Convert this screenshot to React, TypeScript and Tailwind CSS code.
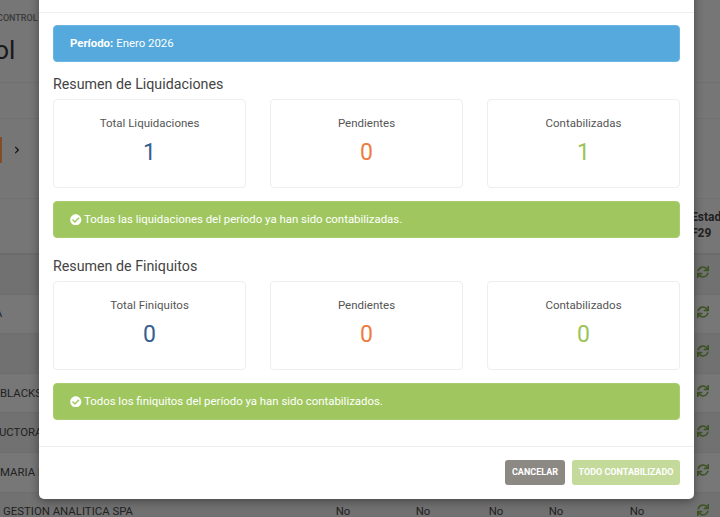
import React from "react";
import { FaCheckCircle, FaSync, FaChevronRight } from "react-icons/fa";

const ROWS = [
  { name: "", shift: "ml-0", stripe: "bg-[#e3e3e3]" },
  { name: "EMPRESA", shift: "-ml-[49px]", stripe: "bg-[#efefef]" },
  { name: "", shift: "ml-0", stripe: "bg-[#e3e3e3]" },
  { name: "BLACKSTONE", shift: "ml-0", stripe: "bg-[#efefef]" },
  { name: "CONSTRUCTORA", shift: "-ml-[45px]", stripe: "bg-[#e3e3e3]" },
  { name: "MARIA DEL", shift: "ml-0", stripe: "bg-[#efefef]" },
  { name: "GESTION ANALITICA SPA", shift: "ml-[3px]", stripe: "bg-[#e3e3e3]" },
];

const Stat = ({ label, value, color }: { label: string; value: number; color: string }) => (
  <div className="h-[88.5px] rounded border border-[#eeeeee] bg-white pt-[14px] text-center">
    <div className="text-[11.5px] leading-[18px] text-[#555555]">{label}</div>
    <div className={`mt-[7px] text-[23px] leading-[28px] ${color}`}>{value}</div>
  </div>
);

const Resumen = ({ title, stats, message }: { title: string; stats: { label: string; value: number; color: string }[]; message: string }) => (
  <section>
    <h3 className="text-[14.25px] leading-[21px] text-[#444444]">{title}</h3>
    <div className="mt-[4px] grid grid-cols-3 gap-x-[24px]">
      {stats.map((s) => (
        <Stat key={s.label} {...s} />
      ))}
    </div>
    <div className="mt-[13px] flex h-[37px] items-center gap-[2.5px] rounded border border-[#a9cc6e] bg-[#a0c75f] pl-[16px] pt-[1px] text-[11.4px] text-white">
      <FaCheckCircle className="text-[11.5px]" />
      <span>{message}</span>
    </div>
  </section>
);

export default function App() {
  return (
    <div className="relative h-screen w-full overflow-hidden bg-[#ececec] font-['Roboto',sans-serif]">
      {/* pagina de fondo */}
      <div className="w-[760px]">
        <div className="h-[83px] border-b border-[#e0e0e0]">
          <div className="-ml-[3px] pt-[13px] text-[9px] font-medium leading-[11px] text-[#777777]">CONTROL</div>
          <div className="-ml-[69px] mt-[9px] text-[26px] leading-[34px] text-[#333333]">Control</div>
        </div>
        <div className="h-[36px] border-b border-[#e0e0e0]" />
        <div className="flex h-[80px] items-center border-b border-[#e0e0e0] pb-[18px]">
          <div className="h-[26px] w-[2px] bg-[#ff9a50]" />
          <FaChevronRight className="ml-[11px] text-[8px] text-[#222222]" />
        </div>
        <div className="flex h-[56px] border-b-2 border-[#d8d8d8]">
          <div className="w-[691px]" />
          <div className="pt-[10px] text-[12px] font-bold leading-[16px] text-[#444444]">
            Estado
            <br />
            F29
          </div>
        </div>
        {ROWS.map((r, i) => (
          <div key={i} className={`flex h-[39.6px] items-center border-b border-[#dcdcdc] text-[11.4px] text-[#444444] ${r.stripe}`}>
            <div className="w-[303px] whitespace-nowrap">
              <div className={r.shift}>{r.name}</div>
            </div>
            <div className="w-[80px] text-center">No</div>
            <div className="w-[80px] text-center">No</div>
            <div className="w-[66px] text-center">No</div>
            <div className="w-[54px] text-center">No</div>
            <div className="w-[108px] text-center">No</div>
            <div className="mb-[4px] flex w-[24px] justify-center">
              <FaSync className="text-[12px] text-[#7ca748]" />
            </div>
          </div>
        ))}
      </div>

      <div className="absolute inset-0 bg-black/50" />

      {/* modal */}
      <div className="absolute left-[39px] top-[-20px] w-[655px] rounded-[5px] bg-white shadow-[0_2px_10px_rgba(0,0,0,0.4)]">
        <div className="h-[33px] border-b border-[#eeeeee]" />
        <div className="px-[14px] pb-[26.5px] pt-[12px]">
          <div className="flex h-[37px] items-center rounded border border-[#6bb5e2] bg-[#55a9dc] pl-[16px] pt-[1px] text-[11.4px] text-white">
            <span className="font-bold">Período:</span>
            <span className="ml-[3px]">Enero 2026</span>
          </div>
          <div className="mt-[12px]">
            <Resumen
              title="Resumen de Liquidaciones"
              message="Todas las liquidaciones del período ya han sido contabilizadas."
              stats={[
                { label: "Total Liquidaciones", value: 1, color: "text-[#35608f]" },
                { label: "Pendientes", value: 0, color: "text-[#ed7d3f]" },
                { label: "Contabilizadas", value: 1, color: "text-[#9bc558]" },
              ]}
            />
          </div>
          <div className="mt-[18.5px]">
            <Resumen
              title="Resumen de Finiquitos"
              message="Todos los finiquitos del período ya han sido contabilizados."
              stats={[
                { label: "Total Finiquitos", value: 0, color: "text-[#35608f]" },
                { label: "Pendientes", value: 0, color: "text-[#ed7d3f]" },
                { label: "Contabilizados", value: 0, color: "text-[#9bc558]" },
              ]}
            />
          </div>
        </div>
        <div className="flex h-[52.5px] items-center justify-end gap-[7px] border-t border-[#eeeeee] pr-[14px]">
          <button className="h-[25px] w-[60px] rounded-[3px] bg-[#8c8984] text-[9px] font-bold text-white">CANCELAR</button>
          <button className="h-[25px] w-[108px] rounded-[3px] bg-[#c3da9b] text-[9px] font-bold text-white">TODO CONTABILIZADO</button>
        </div>
      </div>
    </div>
  );
}
